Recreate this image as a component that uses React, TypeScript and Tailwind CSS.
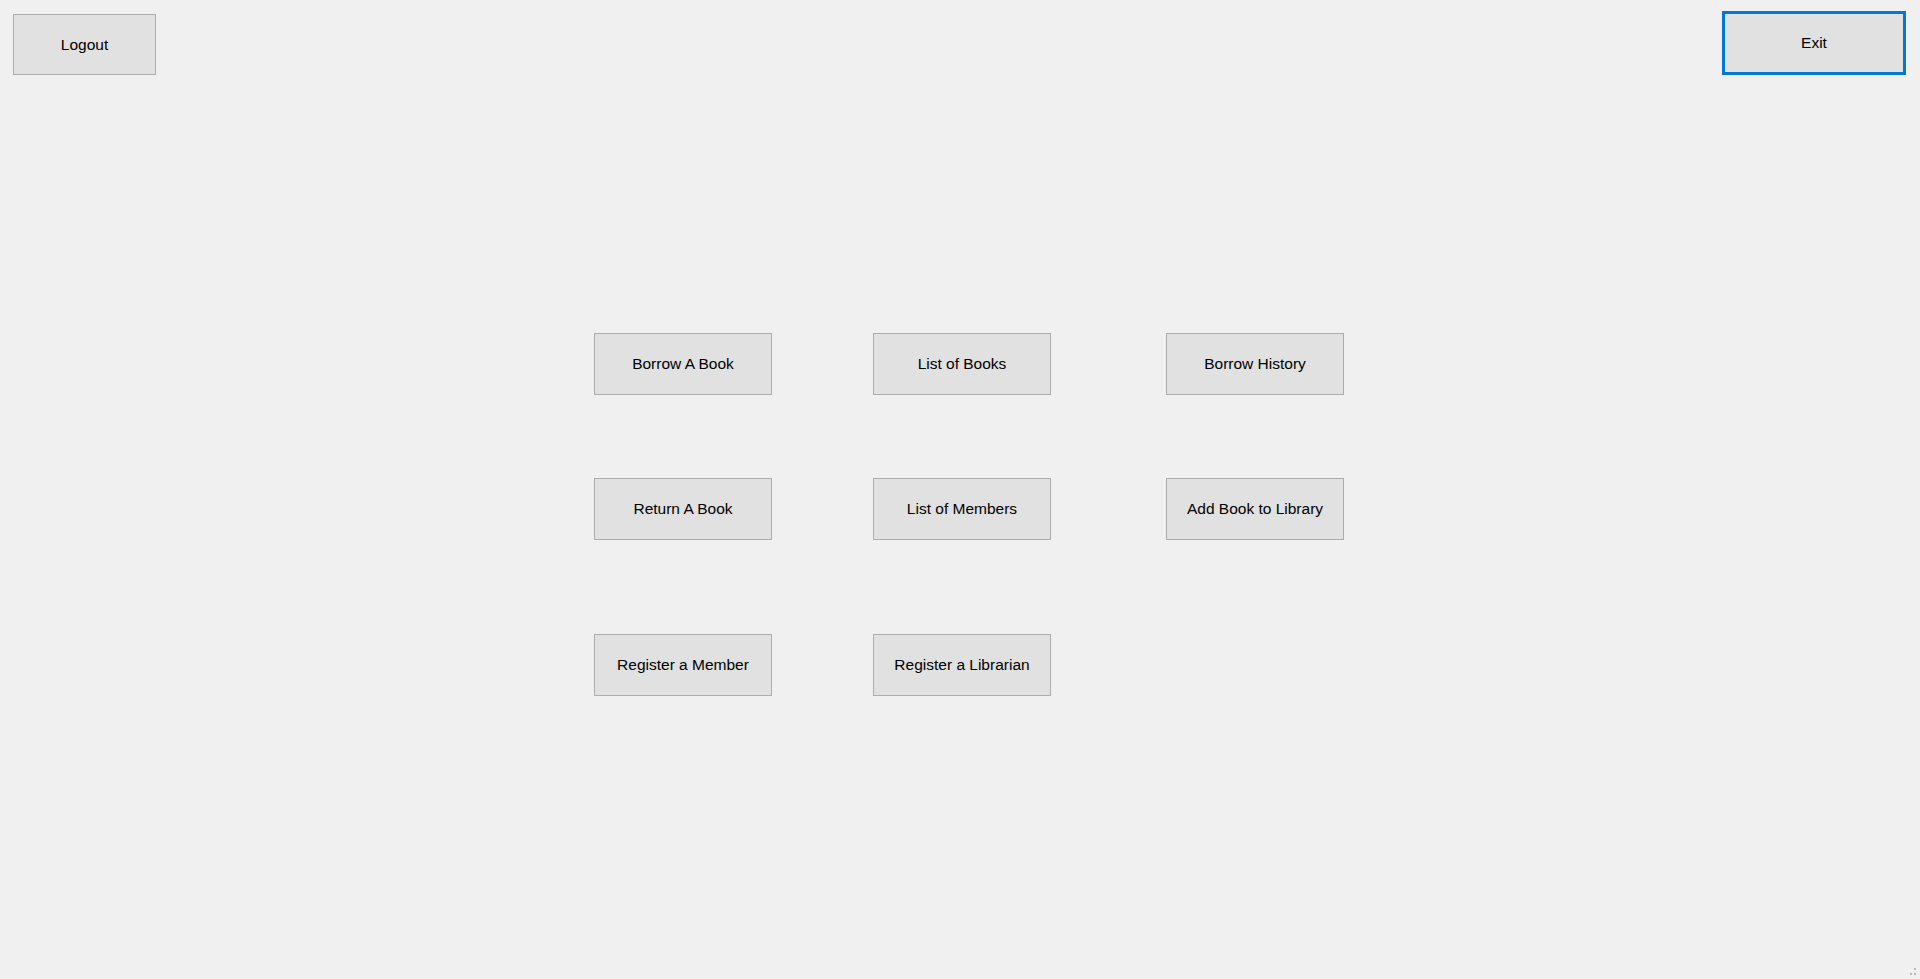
import React from 'react';

const font = { fontFamily: '"Liberation Sans", Arial, sans-serif' };

function WinButton({ label, className = '' }: { label: string; className?: string }) {
  return (
    <button
      type="button"
      className={`flex items-center justify-center bg-[#e1e1e1] border border-[#adadad] text-[15.5px] text-black ${className}`}
    >
      {label}
    </button>
  );
}

export default function App() {
  const rows = [
    ['Borrow A Book', 'List of Books', 'Borrow History'],
    ['Return A Book', 'List of Members', 'Add Book to Library'],
    ['Register a Member', 'Register a Librarian'],
  ];

  return (
    <div className="relative w-full h-[979px] bg-[#f0f0f0] overflow-hidden" style={font}>
      {/* top bar */}
      <div className="flex items-start justify-between">
        <WinButton label="Logout" className="mt-[14px] ml-[13px] w-[143px] h-[61px]" />
        <button
          type="button"
          className="mt-[11px] mr-[14px] w-[184px] h-[64px] flex items-center justify-center bg-[#e1e1e1] border-[3px] border-[#0078d7] text-[15.5px] text-black"
        >
          Exit
        </button>
      </div>

      {/* main menu */}
      <div className="ml-[594px] mt-[258px] grid grid-cols-[279px_293px_178px] grid-rows-[145px_156px_62px]">
        {rows.map((row, i) =>
          row.map((label, j) => (
            <div key={`${i}-${j}`} className={j === 0 ? 'col-start-1' : j === 1 ? 'col-start-2' : 'col-start-3'}>
              <WinButton label={label} className="w-[178px] h-[62px]" />
            </div>
          ))
        )}
      </div>

      {/* size grip */}
      <svg className="absolute right-[2px] bottom-[2px]" width="10" height="10" viewBox="0 0 10 10">
        <rect x="6" y="1" width="2" height="2" fill="#b8b8b8" />
        <rect x="2" y="6" width="2" height="2" fill="#b8b8b8" />
        <rect x="6" y="6" width="2" height="2" fill="#b8b8b8" />
      </svg>
    </div>
  );
}
